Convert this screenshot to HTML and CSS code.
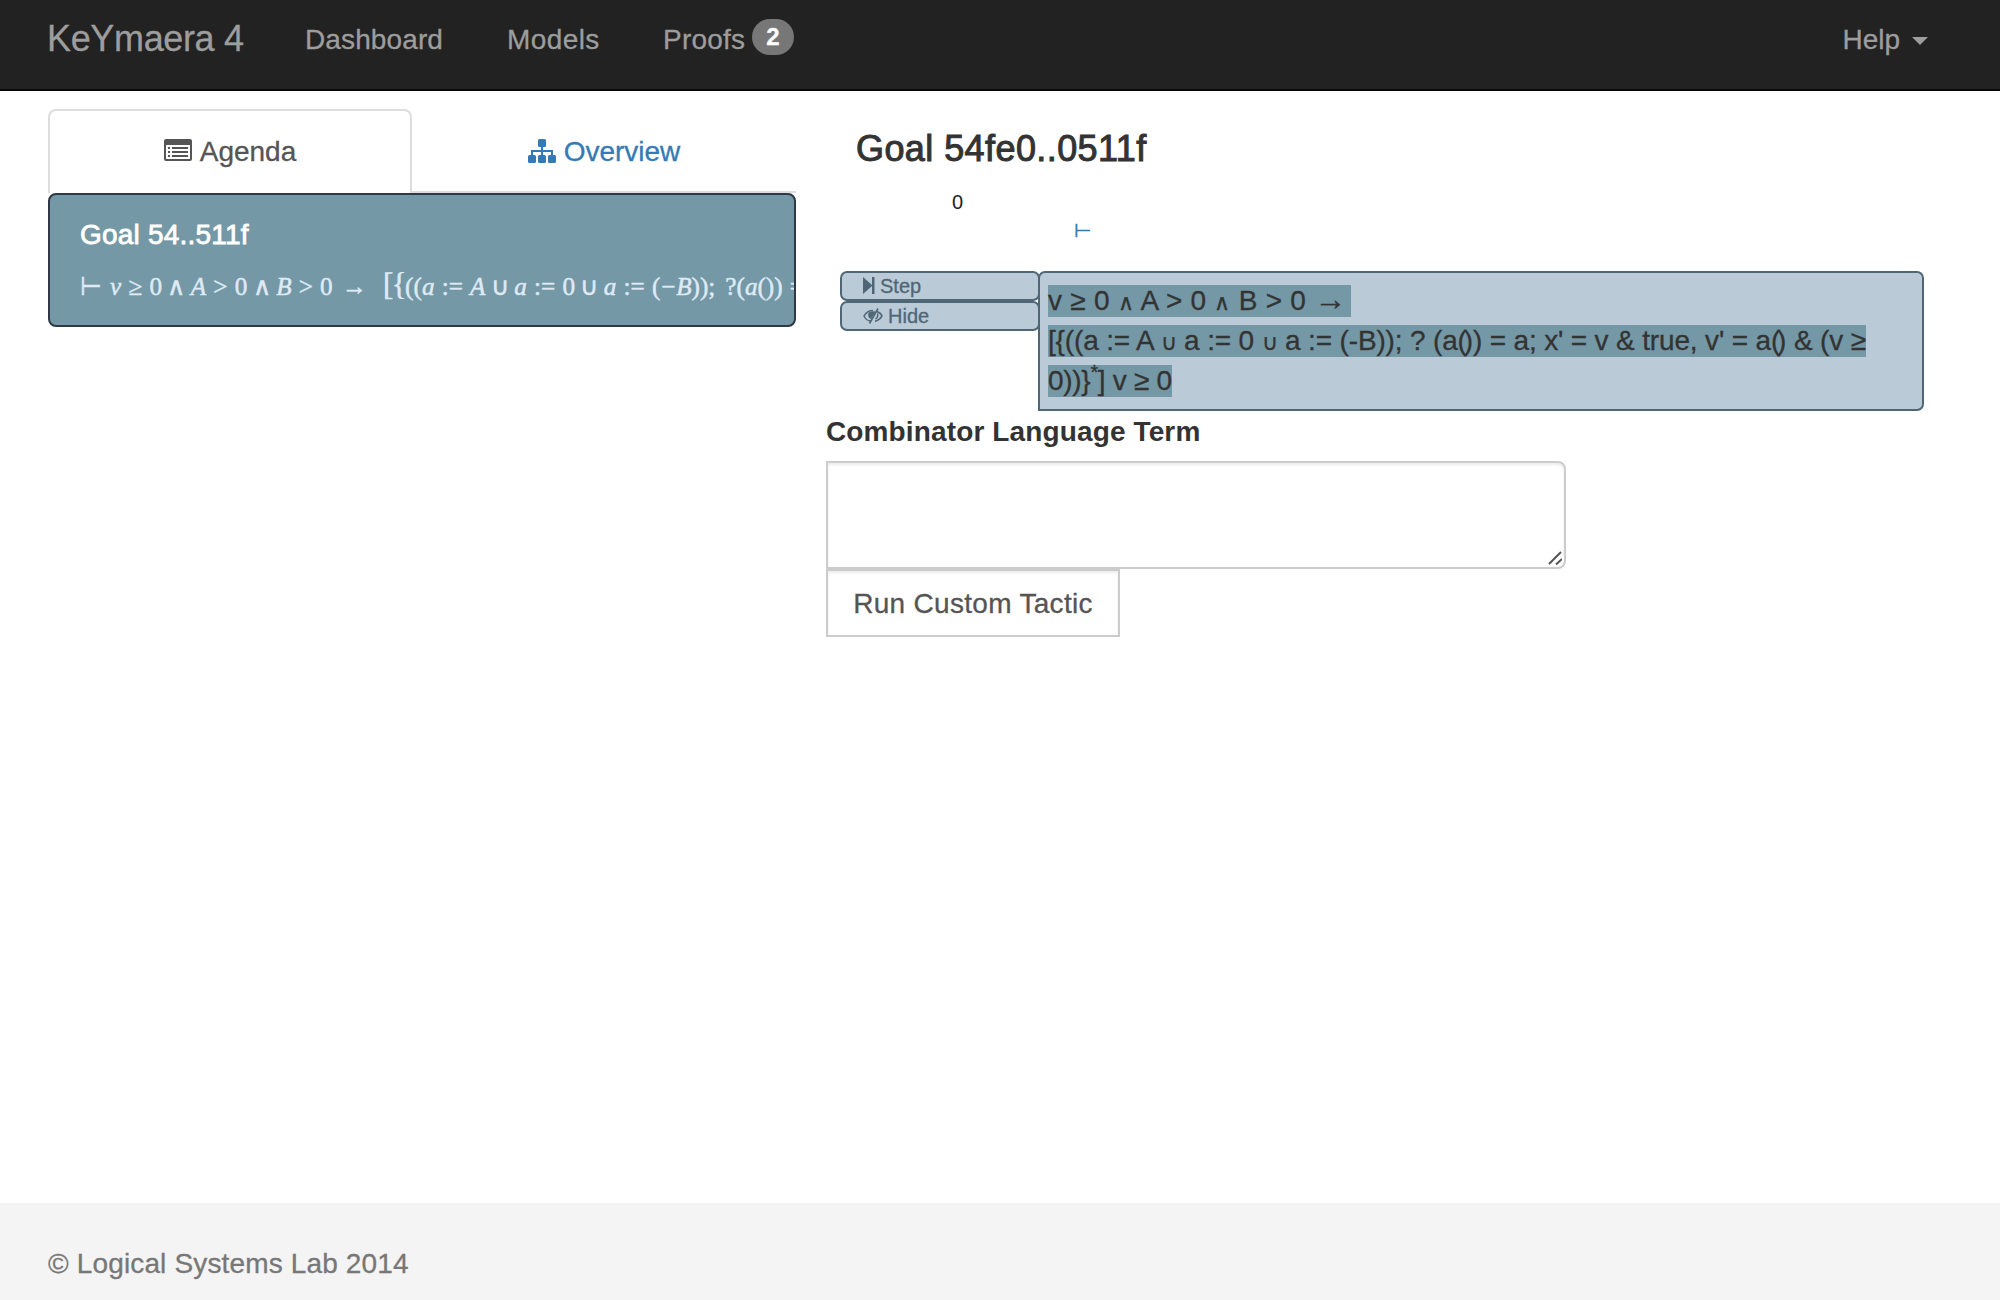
FILE: index.html
```html
<!DOCTYPE html>
<html lang="en">
<head>
<meta charset="utf-8">
<title>KeYmaera 4</title>
<link rel="stylesheet" href="styles.css">
</head>
<body>
<nav class="navbar">
  <a class="brand">KeYmaera 4</a>
  <a class="nav-item dash">Dashboard</a>
  <a class="nav-item models">Models</a>
  <a class="nav-item proofs">Proofs</a><span class="badge">2</span>
  <a class="nav-item help">Help</a><span class="caret"></span>
</nav>
<main class="content">
  <section class="left">
    <div class="tabs">
      <a class="tab active">
        <svg class="icon" width="28" height="24" viewBox="0 0 28 24"><path fill="#555" fill-rule="evenodd" d="M2 0h24a2 2 0 0 1 2 2v18a2 2 0 0 1-2 2H2a2 2 0 0 1-2-2V2a2 2 0 0 1 2-2zM2 6v14h24V6zM4 8h2v2H4zM8 8h16v2H8zM4 12h2v2H4zM8 12h16v2H8zM4 16h2v2H4zM8 16h16v2H8z"/></svg><span class="agenda">Agenda</span>
      </a>
      <a class="tab">
        <svg class="icon" width="28" height="24" viewBox="0 0 28 24"><g fill="#337ab7"><rect x="10" width="8" height="8" rx="1.5"/><rect y="16" width="8" height="8" rx="1.5"/><rect x="10" y="16" width="8" height="8" rx="1.5"/><rect x="20" y="16" width="8" height="8" rx="1.5"/></g><path d="M14 7v10M4 17v-5h20v5" fill="none" stroke="#337ab7" stroke-width="2"/></svg><span class="overview">Overview</span>
      </a>
    </div>
    <div class="goal-card">
      <h4 class="goal-title">Goal 54..511f</h4>
      <p class="math"><span class="turn">⊢</span><i>v</i><span class="rel">≥</span>0<span class="bin">∧</span><i>A</i><span class="rel">&gt;</span>0<span class="bin">∧</span><i>B</i><span class="rel">&gt;</span>0<span class="rel arrow">→</span><span class="big">[{</span>((<i>a</i><span class="rel">:=</span><i>A</i><span class="bin">∪</span><i>a</i><span class="rel">:=</span>0<span class="bin">∪</span><i>a</i><span class="rel">:=</span>(<span class="neg">−</span><i>B</i>));<span class="q">?</span>(<i>a</i>())<span class="rel">=</span><i>a</i></p>
    </div>
  </section>
  <section class="right">
    <h3 class="heading">Goal 54fe0..0511f</h3>
    <div class="index">0</div>
    <div class="turnstile">⊢</div>
    <div class="sequent">
      <div class="actions">
        <a class="action"><svg width="12" height="18" viewBox="0 0 12 18"><path fill="#4f6676" d="M0 0l9 8V0h2.500v17H9V9L0 17z"/></svg><span class="step">Step</span></a>
        <a class="action"><svg width="20" height="16" viewBox="0 0 20 16"><path d="M8 13C5 13 2 10.500 1 8C3 4.500 6 2.500 10 2.500M14 3.500C16.500 4.500 18.500 6.500 19 8C17.500 10.500 15 12.500 12 13.200M14.500 5.500c.8 2.500-.5 4.500-2 5.500" fill="none" stroke="#4f6676" stroke-width="1.500"/><path d="M5.500 5C4.500 8 6 10.500 8 11L12.500 3.500C9 3 6.500 4 5.500 5z" fill="#4f6676"/><path d="M15 .5L6.500 15.500" stroke="#4f6676" stroke-width="1.600"/></svg><span class="hide">Hide</span></a>
      </div>
      <div class="formula">
        <div class="line"><span class="hl l1">v ≥ 0 <small>∧</small> A &gt; 0 <small>∧</small> B &gt; 0 <span class="to">→</span></span></div>
        <div class="line"><span class="hl l2">[{((a := A <small>∪</small> a := 0 <small>∪</small> a := (-B)); ? (a<span class="call">(</span>)) = a; x' = v &amp; true, v' = a<span class="call">(</span>) &amp; (v ≥</span></div>
        <div class="line"><span class="hl l3">0))}<sup>*</sup>] v ≥ 0</span></div>
      </div>
    </div>
    <label class="term-label">Combinator Language Term</label>
    <div class="term"><svg width="14" height="14" viewBox="0 0 14 14"><path d="M1 13L13 1M8 13.500L14 8" stroke="#555" stroke-width="2" fill="none"/></svg></div>
    <button class="run"><span class="runtext">Run Custom Tactic</span></button>
  </section>
</main>
<footer class="footer"><span class="copy">© Logical Systems Lab 2014</span></footer>
</body>
</html>
```
FILE: styles.css
```css
* { box-sizing: border-box; }
body { margin: 0; height: 1300px; display: flex; flex-direction: column; background: #fff; color: #333; font: 28px/40px "Liberation Sans", Arial, sans-serif; overflow: hidden; }
h3, h4, p { margin: 0; font-weight: 400; }
.navbar { height: 91px; flex: none; background: #222; border-bottom: 2px solid #080808; color: #9d9d9d; display: flex; align-items: flex-start; padding: 19px 72px 0 47px; white-space: nowrap; -webkit-text-stroke: .3px; }
.brand { font-size: 36px; width: 258px; letter-spacing: -.35px; }
.nav-item { padding-top: 1px; }
.dash { width: 202px; letter-spacing: .12px; }
.models { width: 156px; letter-spacing: .4px; }
.proofs { width: 89px; letter-spacing: .2px; }
.badge { width: 42px; height: 36px; border-radius: 18px; background: #777; color: #fff; font: bold 24px/35px "Liberation Sans", Arial, sans-serif; text-align: center; }
.help { margin-left: auto; }
.caret { border: 8px solid transparent; border-top-color: #9d9d9d; border-bottom: 0; margin: 18px 0 0 12px; }
.content { flex: 1; display: flex; align-items: flex-start; padding: 18px 76px 0 48px; }
.left { width: 748px; flex: none; }
.tabs { display: flex; height: 84px; }
.tab { flex: 1; color: #337ab7; display: flex; justify-content: center; padding-top: 23px; gap: 8px; border-bottom: 2px solid #ddd; -webkit-text-stroke: .3px; }
.tab.active { flex: none; width: 364px; color: #555; border: 2px solid #ddd; border-bottom: 0; border-radius: 8px 8px 0 0; padding-top: 21px; }
.icon { margin-top: 7px; }
.goal-card { height: 134px; background: #7498a6; border: 2px solid #2f3844; border-radius: 8px; padding: 20px 0 0 30px; color: #dfeaf5; overflow: hidden; white-space: nowrap; }
.goal-title { color: #fff; -webkit-text-stroke: .8px #fff; letter-spacing: .2px; }
.math { font: 25.2px/40px "Liberation Serif", serif; margin-top: 12px; -webkit-text-stroke: .5px; }
.rel { margin: 0 7.2px; }
.bin { margin: 0 5.4px; }
.turn { margin-right: 8px; }
.arrow { margin: 0 16px 0 9px; }
.big { font-size: 31px; line-height: 0; letter-spacing: -1.5px; }
.neg { margin: 0 .8px; }
.q { margin-left: 10px; }
.right { margin-left: 30px; flex: 1; display: flex; flex-direction: column; align-items: flex-start; }
.heading { font-size: 36px; margin: 20px 0 0 30px; -webkit-text-stroke: 1px #333; letter-spacing: .42px; }
.index { font-size: 20px; line-height: 30px; margin: 18px 0 0 126px; color: #222; }
.turnstile { color: #337ab7; font-size: 20px; line-height: 30px; margin: -2px 0 0 248px; -webkit-text-stroke: .5px; }
.sequent { display: flex; align-items: flex-start; margin: 26px 0 0 14px; }
.actions { width: 198px; }
.action { display: flex; align-items: center; height: 30px; width: 200px; border: 2px solid #4f6676; border-radius: 7px; background: #bbcad7; color: #4f6676; font-size: 20px; line-height: 26px; padding-left: 21px; gap: 5px; -webkit-text-stroke: .3px; }
.formula { position: relative; width: 886px; height: 140px; border: 2px solid #4f6676; border-radius: 7px 7px 7px 0; background: #bbcad7; padding: 8px 0 0 8px; white-space: nowrap; -webkit-text-stroke: .3px; }
.line { height: 40px; }
.hl { background: #7498a6; padding-bottom: 1px; }
.hl small { font-size: 22px; line-height: 0; }
.l1 { letter-spacing: .25px; padding-right: 5px; }
.l2 { letter-spacing: -.16px; }
.l3 { letter-spacing: -.3px; }
.to { font-size: 32px; line-height: 0; }
.call { margin-right: -3px; }
sup { font-size: 20px; line-height: 0; vertical-align: 11px; }
.term-label { font-weight: 700; margin-top: 1px; letter-spacing: .13px; }
.term { width: 740px; height: 108px; border: 2px solid #ccc; border-radius: 0 8px 8px 0; margin-top: 9px; box-shadow: inset 0 2px 3px rgba(0,0,0,.08); display: flex; justify-content: flex-end; align-items: flex-end; padding: 2px; }
.run { width: 294px; height: 68px; background: #fff; border: 2px solid #ccc; font: inherit; color: #555; padding: 1px 0 0; box-shadow: inset 0 2px 3px rgba(0,0,0,.08); letter-spacing: .3px; -webkit-text-stroke: .3px; }
.footer { height: 97px; flex: none; background: #f4f4f4; color: #777; padding: 41px 0 0 48px; letter-spacing: .15px; -webkit-text-stroke: .3px; }
```
